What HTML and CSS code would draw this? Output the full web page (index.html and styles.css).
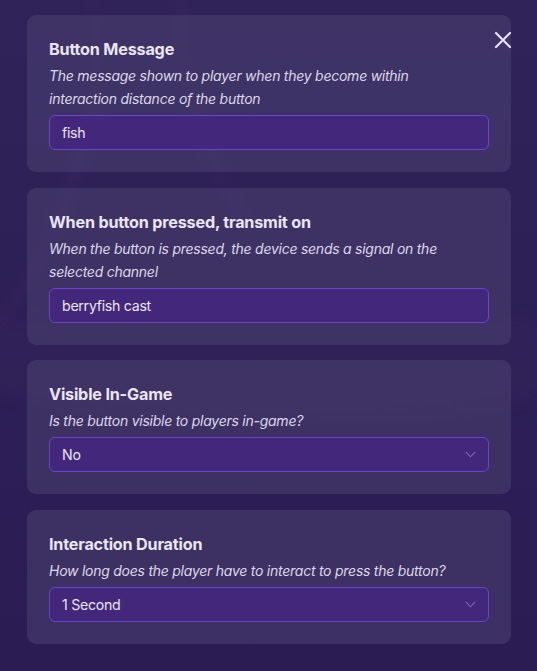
FILE: index.html
```html
<!DOCTYPE html>
<html>
<head>
<meta charset="utf-8">
<link rel="stylesheet" href="styles.css">
</head>
<body>
<div class="page">
  <div class="bg-shape s1"></div>
  <div class="bg-shape s2"></div>
  <div class="bg-shape s3"></div>
  <div class="list">
    <section class="card">
      <h2 class="title">Button Message</h2>
      <p class="desc">The message shown to player when they become within interaction distance of the button</p>
      <div class="field">fish</div>
    </section>
    <section class="card">
      <h2 class="title">When button pressed, transmit on</h2>
      <p class="desc">When the button is pressed, the device sends a signal on the selected channel</p>
      <div class="field">berryfish cast</div>
    </section>
    <section class="card">
      <h2 class="title">Visible In-Game</h2>
      <p class="desc">Is the button visible to players in-game?</p>
      <div class="field select">No
        <svg class="chev" width="11" height="7" viewBox="0 0 11 7"><path d="M0.8 0.8 L5.5 5.8 L10.2 0.8" fill="none" stroke="#7e68b4" stroke-width="1.1"/></svg>
      </div>
    </section>
    <section class="card">
      <h2 class="title">Interaction Duration</h2>
      <p class="desc">How long does the player have to interact to press the button?</p>
      <div class="field select">1 Second
        <svg class="chev" width="11" height="7" viewBox="0 0 11 7"><path d="M0.8 0.8 L5.5 5.8 L10.2 0.8" fill="none" stroke="#7e68b4" stroke-width="1.1"/></svg>
      </div>
    </section>
  </div>
  <button class="close" aria-label="Close">
    <svg width="18" height="18" viewBox="0 0 18 18"><path d="M2 2 L16 16 M16 2 L2 16" stroke="#e4e0ee" stroke-width="2.2" stroke-linecap="round"/></svg>
  </button>
</div>
</body>
</html>
```
FILE: styles.css
```css
html, body {
  margin: 0;
  padding: 0;
}
body {
  background: #2c1f55;
  font-family: Inter, "Noto Sans", sans-serif;
  width: 537px;
  height: 671px;
  overflow: hidden;
}
.page {
  position: relative;
  width: 537px;
  height: 671px;
  overflow: hidden;
  background: linear-gradient(180deg, #30235a 0%, #2d2057 40%, #2b1c54 100%);
}
.bg-shape {
  position: absolute;
  border-radius: 50%;
  filter: blur(6px);
}
.s1 {
  left: -80px;
  top: -40px;
  width: 150px;
  height: 420px;
  border-right: 4px solid rgba(90, 40, 110, 0.45);
  transform: rotate(20deg);
}
.s2 {
  left: 190px;
  top: -60px;
  width: 80px;
  height: 300px;
  border-left: 4px solid rgba(90, 40, 110, 0.4);
  transform: rotate(-15deg);
}
.s3 {
  left: -60px;
  top: 300px;
  width: 680px;
  height: 120px;
  background: rgba(60, 40, 90, 0.25);
}
.list {
  position: relative;
  display: flex;
  flex-direction: column;
  gap: 15.5px;
  padding: 15px 0 0 27px;
  width: 484px;
}
.card {
  background: rgba(72, 62, 110, 0.62);
  border-radius: 9px;
  padding: 22px 22px 22px 22px;
}
.title {
  margin: 0;
  font-size: 16.2px;
  line-height: 24px;
  font-weight: 700;
  color: #e9e5f1;
  letter-spacing: -0.2px;
}
.desc {
  margin: 3px 0 5px 0;
  max-width: 412px;
  font-size: 14px;
  line-height: 23px;
  font-style: italic;
  color: #ddd8e9;
  letter-spacing: -0.25px;
}
.field {
  position: relative;
  box-sizing: border-box;
  height: 35px;
  border: 1px solid #6c43cf;
  border-radius: 6px;
  background: #43277a;
  color: #e9e5f1;
  font-size: 14.2px;
  line-height: 33px;
  padding: 0 12px;
  letter-spacing: -0.3px;
}
.chev {
  position: absolute;
  right: 12px;
  top: 13px;
}
.close {
  position: absolute;
  left: 494px;
  top: 31px;
  width: 18px;
  height: 18px;
  padding: 0;
  border: 0;
  background: none;
}
.close svg {
  display: block;
}
```
